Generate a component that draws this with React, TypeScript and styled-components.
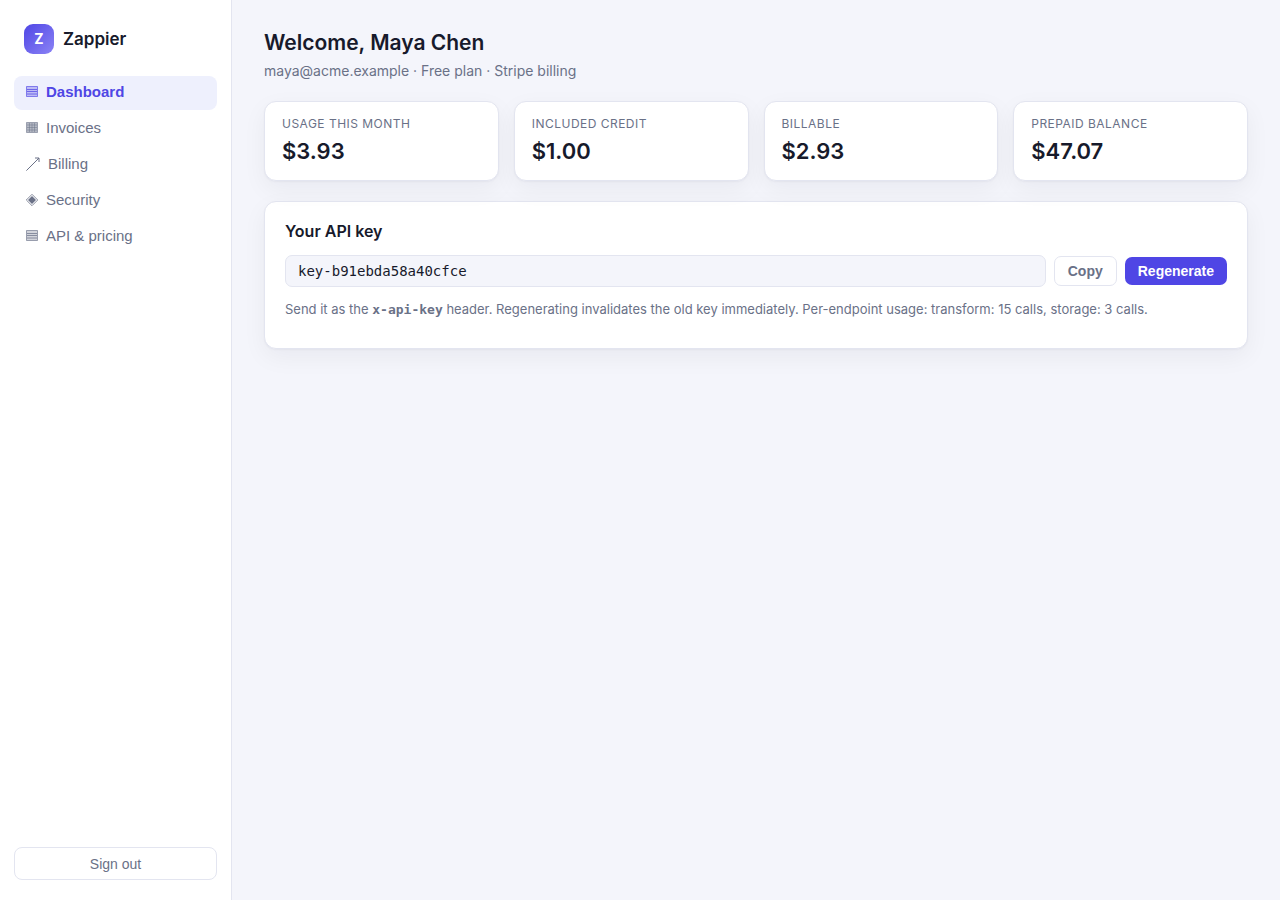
import React from "react";
import styled, { createGlobalStyle } from "styled-components";

const c = {
  ink: "#171a2b",
  muted: "#6a7187",
  line: "#e3e5f0",
  page: "#f4f5fb",
  brand: "#4f46e5",
  tint: "#eef0fd",
};
const ui = `"Liberation Sans", Arial, sans-serif`;

const GlobalStyle = createGlobalStyle`
  *, *::before, *::after { box-sizing: border-box; }
  body {
    margin: 0;
    background: ${c.page};
    color: ${c.ink};
    font-family: Inter, sans-serif;
    font-size: 14px;
    line-height: 20px;
  }
`;

const Shell = styled.div`
  display: flex;
  min-height: 100vh;
`;

const Sidebar = styled.aside`
  display: flex;
  flex-direction: column;
  flex: none;
  width: 232px;
  padding: 24px 14px 20px;
  background: #fff;
  border-right: 1px solid ${c.line};
`;

const Brand = styled.div`
  display: flex;
  align-items: center;
  gap: 9px;
  padding: 0 10px 22px;
  font-size: 17px;
  font-weight: 600;
`;

const BrandMark = styled.span`
  display: grid;
  place-items: center;
  width: 30px;
  height: 30px;
  border-radius: 9px;
  background: linear-gradient(135deg, ${c.brand}, #8b83f5);
  color: #fff;
  font-size: 14px;
  font-weight: 700;
`;

const Nav = styled.nav`
  display: flex;
  flex-direction: column;
  gap: 2px;
`;

const NavLink = styled.a<{ $active?: boolean }>`
  display: flex;
  align-items: center;
  gap: 8px;
  height: 34px;
  padding: 0 12px 2px;
  border-radius: 8px;
  background: ${(p) => (p.$active ? c.tint : "transparent")};
  color: ${(p) => (p.$active ? c.brand : c.muted)};
  font-family: ${ui};
  font-size: 15px;
  font-weight: ${(p) => (p.$active ? 700 : 400)};
  text-decoration: none;
`;

const Button = styled.button<{ $primary?: boolean }>`
  flex: none;
  height: ${(p) => (p.$primary ? 28 : 30)}px;
  padding: 0 13px;
  border: ${(p) => (p.$primary ? "0" : `1px solid ${c.line}`)};
  border-radius: 7px;
  background: ${(p) => (p.$primary ? c.brand : "#fff")};
  color: ${(p) => (p.$primary ? "#fff" : c.muted)};
  font-family: ${ui};
  font-size: 14px;
  font-weight: 700;
  cursor: pointer;
`;

const SignOut = styled(Button)`
  height: 33px;
  margin-top: auto;
  border-radius: 8px;
  font-weight: 400;
`;

const Main = styled.main`
  flex: 1;
  min-width: 0;
  padding: 28px 32px;
`;

const Title = styled.h1`
  margin: 0;
  font-size: 21px;
  line-height: 30px;
  font-weight: 600;
`;

const Subtitle = styled.p`
  margin: 3px 0 20px;
  color: ${c.muted};
`;

const Stats = styled.dl`
  display: grid;
  grid-template-columns: repeat(4, 1fr);
  gap: 15px;
  margin: 0 0 20px;
`;

const Card = styled.div`
  background: #fff;
  border: 1px solid ${c.line};
  border-radius: 12px;
  box-shadow: 0 1px 2px rgba(23, 26, 43, 0.04), 0 8px 24px rgba(23, 26, 43, 0.05);
`;

const Stat = styled(Card)`
  padding: 14px 17px;
`;

const StatLabel = styled.dt`
  color: ${c.muted};
  font-size: 12px;
  line-height: 16px;
  letter-spacing: 0.04em;
  text-transform: uppercase;
`;

const StatValue = styled.dd`
  margin: 4px 0 0;
  font-size: 22px;
  line-height: 30px;
  font-weight: 600;
`;

const KeyCard = styled(Card)`
  padding: 18px 20px 29px;
`;

const KeyTitle = styled.label`
  display: block;
  font-size: 16px;
  line-height: 22px;
  font-weight: 600;
`;

const KeyRow = styled.div`
  display: flex;
  align-items: center;
  gap: 8px;
  margin: 13px 0 12px;
`;

const KeyInput = styled.input`
  flex: 1;
  min-width: 0;
  height: 32px;
  padding: 0 12px;
  border: 1px solid ${c.line};
  border-radius: 7px;
  background: ${c.page};
  color: ${c.ink};
  font-family: "DejaVu Sans Mono", monospace;
  font-size: 14px;
`;

const Hint = styled.p`
  margin: 0;
  color: ${c.muted};
  font-size: 13px;

  code {
    font-family: "DejaVu Sans Mono", monospace;
    font-weight: 700;
    font-size: 13px;
    line-height: 16px;
  }
`;

const Rows = () => (
  <svg width="12" height="12" viewBox="0 0 12 12" fill="none" stroke="currentColor" aria-hidden="true">
    <path d="M.5.5h11v10H.5z" fill="currentColor" fillOpacity=".3" strokeWidth=".8" strokeOpacity=".8" />
    <path d="M1 3.500h10M1 5.500h10M1 8h10" strokeWidth=".9" strokeOpacity=".8" />
  </svg>
);
const Grid = () => (
  <svg width="12" height="12" viewBox="0 0 12 12" fill="none" stroke="currentColor" aria-hidden="true">
    <path d="M.5.5h11v10H.5z" fill="currentColor" fillOpacity=".5" strokeWidth=".8" strokeOpacity=".7" />
    <path d="M1 3h10M1 5.500h10M1 8h10M3.500 1v9M6 1v9M8.500 1v9" strokeWidth=".8" strokeOpacity=".6" />
  </svg>
);
const Arrow = () => (
  <svg width="14" height="14" viewBox="0 0 14 14" fill="none" stroke="currentColor" aria-hidden="true">
    <path d="M.4 13.600 13 1M9 1h4v4" />
  </svg>
);
const Diamond = () => (
  <svg width="12" height="12" viewBox="0 0 12 12" aria-hidden="true">
    <path d="M6 .3 11.700 6 6 11.700.3 6z" fill="none" stroke="currentColor" strokeWidth=".8" />
    <path d="M6 2 10 6 6 10 2 6z" fill="currentColor" />
  </svg>
);

const links = [
  { label: "Dashboard", Icon: Rows, active: true },
  { label: "Invoices", Icon: Grid },
  { label: "Billing", Icon: Arrow },
  { label: "Security", Icon: Diamond },
  { label: "API & pricing", Icon: Rows },
];

const stats = [
  ["Usage this month", "$3.93"],
  ["Included credit", "$1.00"],
  ["Billable", "$2.93"],
  ["Prepaid balance", "$47.07"],
];

export default function App() {
  return (
    <>
      <GlobalStyle />
      <Shell>
        <Sidebar>
          <Brand>
            <BrandMark>Z</BrandMark>
            Zappier
          </Brand>
          <Nav>
            {links.map(({ label, Icon, active }) => (
              <NavLink key={label} href="#" $active={active} aria-current={active ? "page" : undefined}>
                <Icon />
                {label}
              </NavLink>
            ))}
          </Nav>
          <SignOut type="button">Sign out</SignOut>
        </Sidebar>
        <Main>
          <Title>Welcome, Maya Chen</Title>
          <Subtitle>maya@acme.example · Free plan · Stripe billing</Subtitle>
          <Stats>
            {stats.map(([label, value]) => (
              <Stat key={label}>
                <StatLabel>{label}</StatLabel>
                <StatValue>{value}</StatValue>
              </Stat>
            ))}
          </Stats>
          <KeyCard as="section">
            <KeyTitle htmlFor="api-key">Your API key</KeyTitle>
            <KeyRow>
              <KeyInput id="api-key" readOnly defaultValue="key-b91ebda58a40cfce" />
              <Button type="button">Copy</Button>
              <Button type="button" $primary>Regenerate</Button>
            </KeyRow>
            <Hint>
              Send it as the <code>x-api-key</code> header. Regenerating invalidates the old key immediately.
              Per-endpoint usage: transform: 15 calls, storage: 3 calls.
            </Hint>
          </KeyCard>
        </Main>
      </Shell>
    </>
  );
}
